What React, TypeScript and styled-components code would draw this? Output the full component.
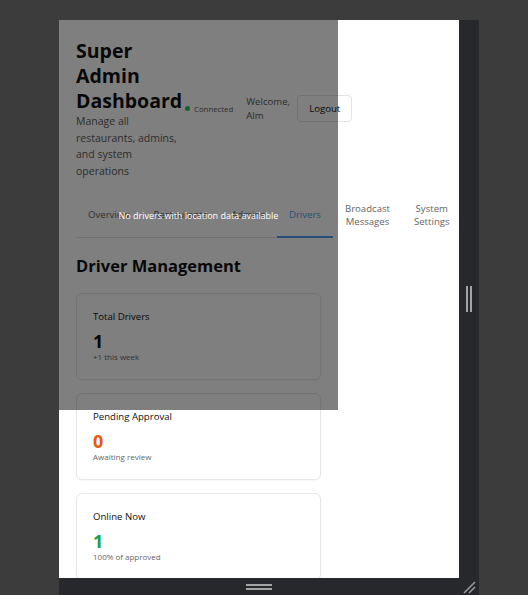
import React from "react";
import styled, { createGlobalStyle } from "styled-components";

const GlobalStyle = createGlobalStyle`
  html, body { margin: 0; padding: 0; background: #3c3c3c; }
  body { font-family: "Open Sans", "Noto Sans", sans-serif; }
  * { box-sizing: border-box; }
`;

const Stage = styled.div`
  padding: 20px 0 0 59px;
`;

const Frame = styled.div`
  display: grid;
  grid-template-columns: 400px 20px;
  grid-template-rows: 558px 17px;
`;

const Viewport = styled.div`
  position: relative;
  background: #ffffff;
  overflow: hidden;
`;

const SideRail = styled.div`
  background: #27282b;
  display: flex;
  align-items: center;
  justify-content: center;
  gap: 2px;
`;

const RailBar = styled.span`
  width: 2px;
  height: 26px;
  background: #a3a3a3;
`;

const BottomRail = styled.div`
  background: #27282b;
  display: flex;
  flex-direction: column;
  align-items: center;
  justify-content: center;
  gap: 2px;
`;

const BottomBar = styled.span`
  width: 26px;
  height: 2px;
  background: #a3a3a3;
`;

const Corner = styled.div`
  background: #27282b;
  display: flex;
  align-items: flex-end;
  justify-content: flex-end;
  padding: 0 3px 1px 0;
`;

const Page = styled.div`
  padding: 18px 17px;
`;

const Header = styled.div`
  display: flex;
  align-items: center;
`;

const TitleBlock = styled.div`
  width: 107px;
  flex-shrink: 0;
`;

const Title = styled.h1`
  margin: 0;
  font-size: 19.5px;
  line-height: 25px;
  font-weight: 700;
  color: #111;
`;

const Subtitle = styled.p`
  margin: 0;
  font-size: 10.5px;
  line-height: 16.7px;
  color: #5a5a5a;
`;

const Status = styled.div`
  display: flex;
  align-items: center;
  gap: 4px;
  font-size: 7.8px;
  color: #5a5a5a;
  margin-left: 2px;
  flex-shrink: 0;
`;

const Dot = styled.span`
  width: 5px;
  height: 5px;
  border-radius: 50%;
  background: #22c55e;
`;

const Welcome = styled.div`
  margin-left: 13px;
  width: 42px;
  font-size: 9.6px;
  line-height: 14px;
  color: #5a5a5a;
  flex-shrink: 0;
`;

const LogoutButton = styled.button`
  margin-left: 9px;
  height: 27px;
  width: 55px;
  flex-shrink: 0;
  padding: 0;
  background: #ffffff;
  border: 1px solid #e2e2e2;
  border-radius: 4px;
  font-family: inherit;
  font-size: 9.6px;
  color: #111;
`;

const Tabs = styled.div`
  margin-top: 14px;
  display: flex;
  width: 255px;
  border-bottom: 1px solid #e3e3e3;
`;

const Tab = styled.div<{ $active?: boolean }>`
  flex-shrink: 0;
  display: flex;
  flex-direction: column;
  align-items: center;
  justify-content: center;
  padding: 8px 12px;
  margin-bottom: -1px;
  font-size: 9.6px;
  line-height: 13px;
  white-space: nowrap;
  text-align: center;
  color: ${(p) => (p.$active ? "#4a9ff5" : "#666")};
  border-bottom: 2px solid ${(p) => (p.$active ? "#4a9ff5" : "transparent")};
`;

const SectionTitle = styled.h2`
  margin: 18px 0 17px;
  font-size: 16.5px;
  line-height: 20px;
  font-weight: 700;
  color: #111;
`;

const Cards = styled.div`
  display: flex;
  flex-direction: column;
  gap: 13px;
  width: 245px;
`;

const StatCard = styled.div`
  border: 1px solid #e6e6e6;
  border-radius: 6px;
  padding: 16px 16px 17px;
  background: #fff;
  box-shadow: 0 1px 2px rgba(0, 0, 0, 0.04);
`;

const StatLabel = styled.div`
  font-size: 9.6px;
  line-height: 14px;
  color: #111;
`;

const StatValue = styled.div<{ $color: string }>`
  margin-top: 6px;
  font-size: 18px;
  line-height: 22px;
  font-weight: 700;
  color: ${(p) => p.$color};
`;

const StatNote = styled.div`
  font-size: 8px;
  line-height: 10px;
  color: #666;
`;

const MapOverlay = styled.div`
  position: absolute;
  top: 0;
  left: 0;
  width: 279px;
  height: 390px;
  background: rgba(0, 0, 0, 0.5);
  display: flex;
  align-items: center;
  justify-content: center;
  color: #ffffff;
  font-size: 9px;
`;

const tabs: { label: string[]; active?: boolean }[] = [
  { label: ["Overview"] },
  { label: ["Restaurants"] },
  { label: ["Admins"] },
  { label: ["Drivers"], active: true },
  { label: ["Broadcast", "Messages"] },
  { label: ["System", "Settings"] },
];

const stats = [
  { label: "Total Drivers", value: "1", color: "#111", note: "+1 this week" },
  { label: "Pending Approval", value: "0", color: "#ea580c", note: "Awaiting review" },
  { label: "Online Now", value: "1", color: "#16a34a", note: "100% of approved" },
];

export default function App() {
  return (
    <>
      <GlobalStyle />
      <Stage>
        <Frame>
          <Viewport>
            <Page>
              <Header>
                <TitleBlock>
                  <Title>Super Admin Dashboard</Title>
                  <Subtitle>Manage all restaurants, admins, and system operations</Subtitle>
                </TitleBlock>
                <Status>
                  <Dot />
                  Connected
                </Status>
                <Welcome>Welcome, Alm</Welcome>
                <LogoutButton>Logout</LogoutButton>
              </Header>
              <Tabs>
                {tabs.map((t) => (
                  <Tab key={t.label.join(" ")} $active={t.active}>
                    {t.label.map((l) => (
                      <span key={l}>{l}</span>
                    ))}
                  </Tab>
                ))}
              </Tabs>
              <SectionTitle>Driver Management</SectionTitle>
              <Cards>
                {stats.map((s) => (
                  <StatCard key={s.label}>
                    <StatLabel>{s.label}</StatLabel>
                    <StatValue $color={s.color}>{s.value}</StatValue>
                    <StatNote>{s.note}</StatNote>
                  </StatCard>
                ))}
              </Cards>
            </Page>
            <MapOverlay>No drivers with location data available</MapOverlay>
          </Viewport>
          <SideRail>
            <RailBar />
            <RailBar />
          </SideRail>
          <BottomRail>
            <BottomBar />
            <BottomBar />
          </BottomRail>
          <Corner>
            <svg width="13" height="13" viewBox="0 0 13 13">
              <path d="M1 12 L12 1 M6 12 L12 6" stroke="#9a9a9a" strokeWidth="1.5" />
            </svg>
          </Corner>
        </Frame>
      </Stage>
    </>
  );
}
